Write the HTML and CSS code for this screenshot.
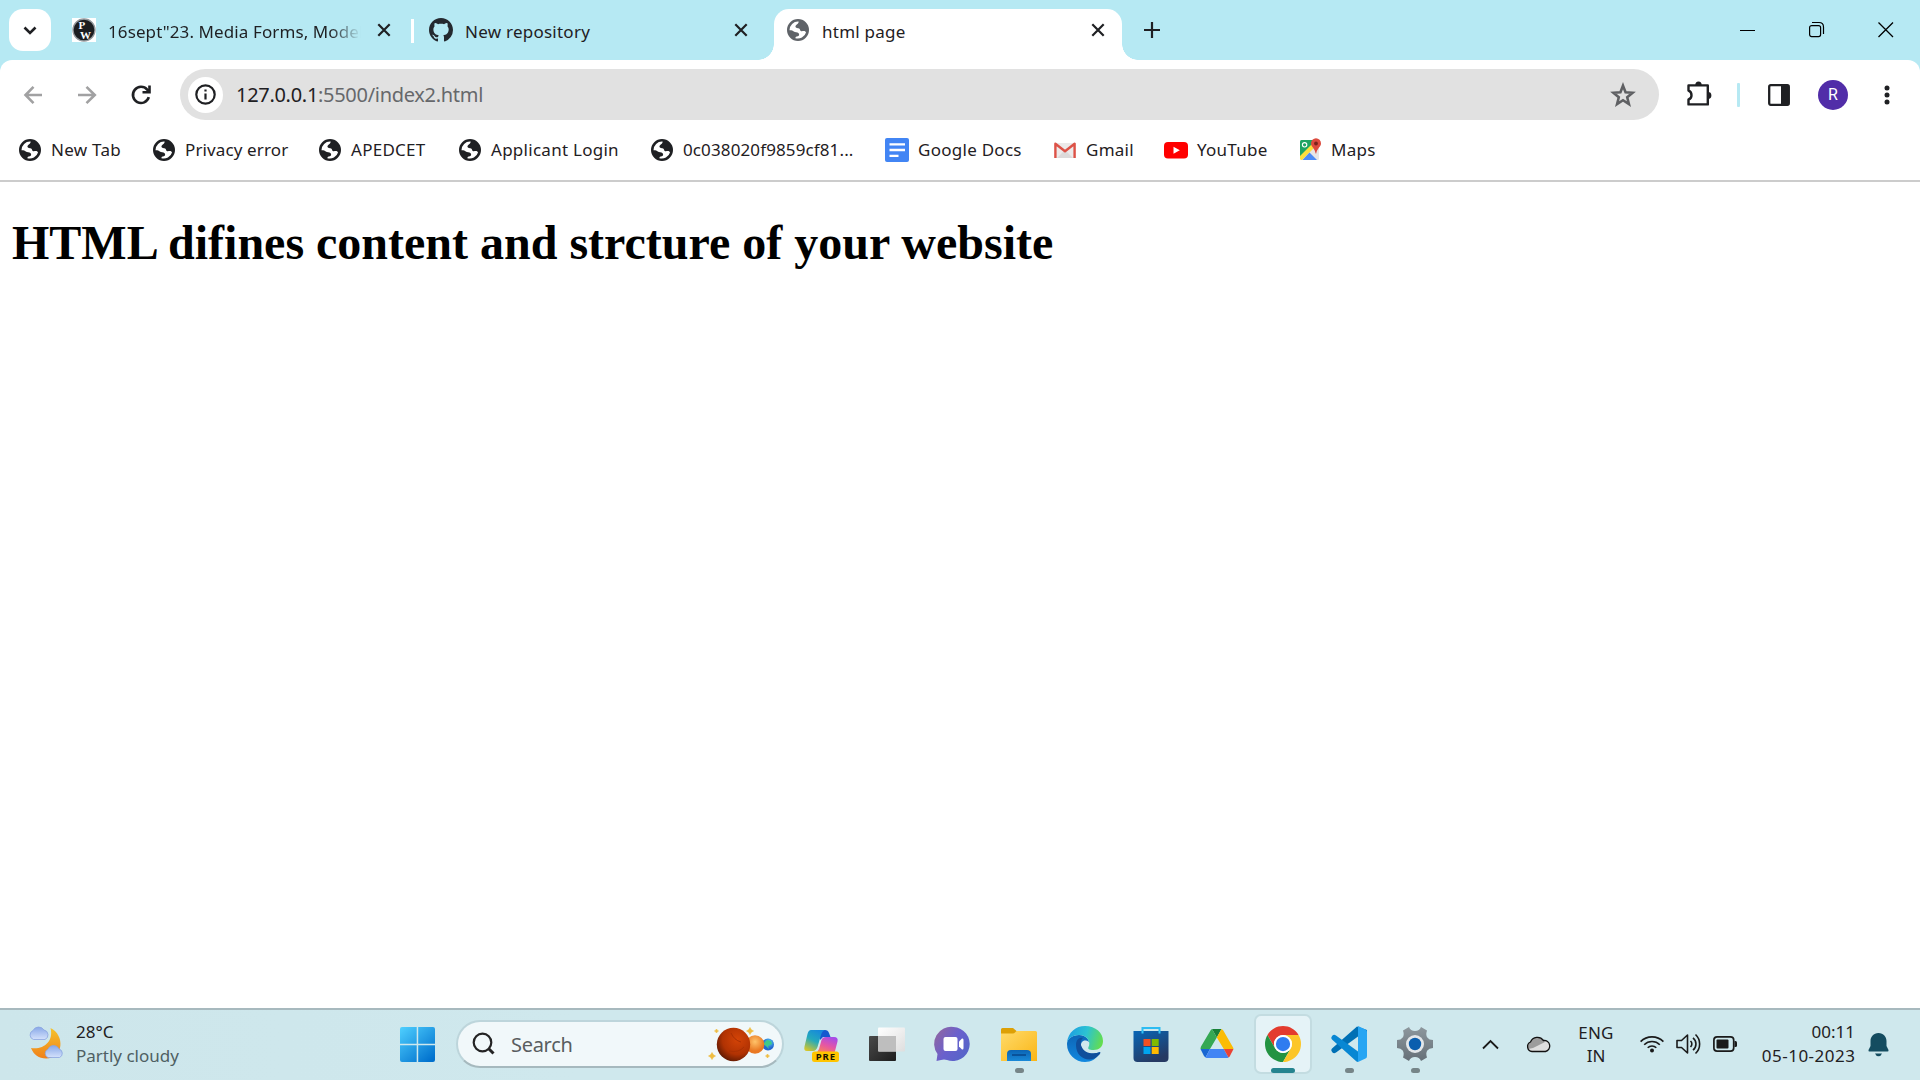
FILE: index.html
```html
<!DOCTYPE html>
<html lang="en">
<head>
<meta charset="utf-8">
<title>html page</title>
<link rel="stylesheet" href="styles.css">
</head>
<body>
<svg class="defs" aria-hidden="true">
  <symbol id="globe" viewBox="0 0 22 22">
    <path d="M11 0a11 11 0 1 0 0 22a11 11 0 0 0 0-22zM11.6 2.6C11.9 4.6 10 5.3 8.8 6.4C8 7.3 8.6 8.6 9.8 8.9C11.8 9.1 13 9.6 13.2 11.2C13.5 12.5 15.4 12.2 16.5 12C17.8 11.8 18.8 12.6 19 13.4A8.6 8.6 0 0 1 8.4 19.2C8.2 18 9.4 17.6 10.8 17.3C12.4 16.9 12.4 15.2 11.6 14.2C10.4 13 8 13.6 6.8 12.6C5.8 11.4 4 11.2 2.5 11.3A8.5 8.5 0 0 1 11.6 2.6z" fill="currentColor" fill-rule="evenodd"/>
  </symbol>
  <symbol id="cross" viewBox="0 0 14 14">
    <path d="M1.3 1.3L12.7 12.7M12.7 1.3L1.3 12.7" fill="none" stroke="currentColor" stroke-width="2.2"/>
  </symbol>
</svg>

<header class="tabstrip">
  <button class="tab-search"><svg width="14" height="9" viewBox="0 0 14 9"><path d="M1.5 1.5L7 7L12.5 1.5" fill="none" stroke="#1f2023" stroke-width="2.6"/></svg></button>
  <div class="tab tab-first">
    <svg class="favicon" viewBox="0 0 24 24"><rect width="24" height="24" fill="#fff"/><circle cx="12" cy="12" r="11" fill="#1b1d20" stroke="#92989c" stroke-width="1.3"/><g fill="#fff" font-family="Liberation Serif, serif" font-weight="700"><text x="6.5" y="10.5" font-size="11">P</text><text x="8" y="20.5" font-size="11">W</text></g></svg>
    <span class="tab-title faded">16sept"23. Media Forms, Models</span>
    <svg class="tab-close"><use href="#cross"/></svg>
  </div>
  <div class="tab-divider"></div>
  <div class="tab tab-second">
    <svg class="favicon" viewBox="0 0 16 16"><path fill="#24292f" d="M8 0C3.58 0 0 3.58 0 8c0 3.54 2.29 6.53 5.47 7.59.4.07.55-.17.55-.38 0-.19-.01-.82-.01-1.49-2.01.37-2.53-.49-2.69-.94-.09-.23-.48-.94-.82-1.13-.28-.15-.68-.52-.01-.53.63-.01 1.08.58 1.23.82.72 1.21 1.87.87 2.33.66.07-.52.28-.87.51-1.07-1.78-.2-3.64-.89-3.64-3.95 0-.87.31-1.59.82-2.15-.08-.2-.36-1.02.08-2.12 0 0 .67-.21 2.2.82.64-.18 1.32-.27 2-.27s1.36.09 2 .27c1.53-1.04 2.2-.82 2.2-.82.44 1.1.16 1.92.08 2.12.51.56.82 1.27.82 2.15 0 3.07-1.87 3.75-3.65 3.95.29.25.54.73.54 1.48 0 1.07-.01 1.93-.01 2.2 0 .21.15.46.55.38A8.01 8.01 0 0 0 16 8c0-4.42-3.58-8-8-8z"/></svg>
    <span class="tab-title">New repository</span>
    <svg class="tab-close"><use href="#cross"/></svg>
  </div>
  <div class="tab tab-active">
    <svg class="favicon-globe"><use href="#globe"/></svg>
    <span class="tab-title">html page</span>
    <svg class="tab-close"><use href="#cross"/></svg>
  </div>
  <svg class="new-tab" viewBox="0 0 16 16"><path d="M8 0V16M0 8H16" stroke="#1f2023" stroke-width="2.2"/></svg>
  <div class="window-controls">
    <svg width="16" height="16"><path d="M0 8.5H15" stroke="#000"/></svg>
    <svg width="16" height="16"><path d="M3 .5H10Q14.5 .5 14.5 5V12" fill="none" stroke="#000" stroke-width="1.2"/><rect x=".6" y="3.6" width="11" height="11" rx="2" fill="none" stroke="#000" stroke-width="1.2"/></svg>
    <svg width="16" height="16"><path d="M.5 .5L15 15M15 .5L.5 15" stroke="#000" stroke-width="1.3"/></svg>
  </div>
</header>

<div class="chrome-panel">
  <nav class="toolbar">
    <svg class="nav-icon dim" viewBox="0 0 20 20"><path d="M18 10H2.500M9.500 1.8L1.500 10L9.500 18.2" /></svg>
    <svg class="nav-icon dim" viewBox="0 0 20 20"><path d="M1 10H17M9.5 1.8L17.8 10L9.5 18.2"/></svg>
    <svg class="nav-icon reload" viewBox="0 0 20 20"><path d="M17.8 12.2A8.1 8.1 0 1 1 16.2 4.6L18 6.6M18.5 .6V7.2H11.5"/></svg>
    <div class="omnibox">
      <span class="site-info"><svg width="21" height="21" viewBox="0 0 21 21"><circle cx="10.5" cy="10.5" r="9.2" fill="none" stroke="#1f2023" stroke-width="2.2"/><path d="M10.5 9.5V15.5M10.5 5.4V7.6" stroke="#1f2023" stroke-width="2.2"/></svg></span>
      <span class="url">127.0.0.1<span class="url-path">:5500/index2.html</span></span>
      <svg class="star" viewBox="0 0 24 24"><path d="M12 4L14.2 9.700L20.200 10.100L15.600 13.900L17.100 19.800L12 16.500L6.900 19.800L8.400 13.900L3.800 10.100L9.800 9.700Z" fill="none" stroke="#5f6063" stroke-width="2.2"/></svg>
    </div>
    <svg class="puzzle" viewBox="0 0 26 26"><path d="M2.500 3.400H21.800V22.400H2.500V17.500C6.500 16.500 6.500 10 2.500 8.600Z" fill="none" stroke="#1f2023" stroke-width="2.400" stroke-linejoin="round"/><path d="M9.300 3.200A3.200 3.600 0 0 1 15.700 3.200ZM22 10A3.400 3.400 0 0 1 22 16.800Z" fill="#1f2023"/></svg>
    <div class="toolbar-divider"></div>
    <svg class="side-panel" viewBox="0 0 22 22"><rect x="1.2" y="1.2" width="19.6" height="19.6" rx="1.5" fill="none" stroke="#1f2023" stroke-width="2.3"/><path d="M13 1H21V21H13Z" fill="#1f2023"/></svg>
    <div class="avatar">R</div>
    <svg class="menu-dots" viewBox="0 0 6 20"><g fill="#1f2023"><circle cx="3" cy="3" r="2.5"/><circle cx="3" cy="10" r="2.5"/><circle cx="3" cy="17" r="2.5"/></g></svg>
  </nav>
  <nav class="bookmarks">
    <a><svg class="mark-globe"><use href="#globe"/></svg><span>New Tab</span></a>
    <a><svg class="mark-globe"><use href="#globe"/></svg><span class="tight">Privacy error</span></a>
    <a><svg class="mark-globe"><use href="#globe"/></svg><span>APEDCET</span></a>
    <a><svg class="mark-globe"><use href="#globe"/></svg><span>Applicant Login</span></a>
    <a><svg class="mark-globe"><use href="#globe"/></svg><span class="tight">0c038020f9859cf81...</span></a>
    <a><svg class="mark-icon" viewBox="0 0 24 24"><rect width="24" height="24" rx="2" fill="#4285f4"/><path d="M4.500 6.300H20M4.500 12H20M4.500 17.900H13.500" stroke="#fff" stroke-width="2.300"/></svg><span>Google Docs</span></a>
    <a><svg class="mark-icon" viewBox="0 0 24 24"><path d="M3 5H21V20H3Z" fill="#eceaea"/><path d="M4 20L11 13H13L20 20Z" fill="#dcdada"/><path d="M2.4 20V5.8L12 13.2L21.6 5.8V20" fill="none" stroke="#dd5247" stroke-width="2.4" stroke-linejoin="round"/></svg><span>Gmail</span></a>
    <a><svg class="mark-icon" viewBox="0 0 24 24"><rect y="4" width="24" height="16.5" rx="4" fill="#f00"/><path d="M9.5 8.7L15.8 12.2L9.5 15.7Z" fill="#fff"/></svg><span>YouTube</span></a>
    <a><svg class="mark-icon" viewBox="0 0 24 24"><rect x="1" y="2" width="19" height="20" rx="1.5" fill="#e6e6e6"/><path d="M2.5 2H15V9L2 21Q1 21 1 20V3.5Q1 2 2.5 2Z" fill="#1fa463"/><path d="M1 18L13 6L16 9L3 22H2L1 21Z" fill="#fddf3d"/><path d="M3.5 22L10.5 14.5L18 22Z" fill="#4c8bf5"/><circle cx="5.6" cy="6.8" r="2.2" fill="none" stroke="#fff" stroke-width="1.1"/><path d="M17 0.3A5 5 0 0 1 22 5.4C22 9 18 10 17.2 15.5H16.6C16 10 12 9 12 5.4A5 5 0 0 1 17 .3Z" fill="#dc4b3e"/><circle cx="17" cy="5.5" r="1.9" fill="#7b231c"/></svg><span class="maps-label">Maps</span></a>
  </nav>
</div>

<main class="page"><h1>HTML difines content and strcture of your website</h1></main>

<footer class="taskbar">
  <div class="weather">
    <svg width="38" height="36" viewBox="0 0 38 36">
      <defs><linearGradient id="moon" x2="0" y2="1"><stop stop-color="#f5c32c"/><stop offset="1" stop-color="#f0801a"/></linearGradient><linearGradient id="cloud" x2="0" y2="1"><stop stop-color="#88a8e8"/><stop offset="1" stop-color="#d4e1fb"/></linearGradient></defs>
      <path d="M22.5 3C37 10 36 33 18 33.5C11 33.5 5.500 29.500 3 23C15 25 26 17 22.500 3Z" fill="url(#moon)"/>
      <path d="M5.500 14.500A4.800 4.800 0 0 1 5 5.500A6.300 6.300 0 0 1 16 5A5 5 0 0 1 17 14.500Z" fill="url(#cloud)" stroke="#8aa4df" stroke-width=".8"/>
      <path d="M20 32.500A4.500 4.500 0 0 1 20 24.200A6 6 0 0 1 31 24A4.500 4.500 0 0 1 31.500 32.500Z" fill="url(#cloud)" stroke="#8aa4df" stroke-width=".8"/>
    </svg>
    <div class="weather-text"><span class="temp">28°C</span><span class="sky">Partly cloudy</span></div>
  </div>
  <svg class="start" viewBox="0 0 35 35"><defs><linearGradient id="win" gradientUnits="userSpaceOnUse" x2="30" y2="35"><stop stop-color="#4fd0ff"/><stop offset="1" stop-color="#0070cd"/></linearGradient></defs><path d="M2 0H16.700V16.700H0V2Q0 0 2 0ZM18.200 0H33Q35 0 35 2V16.700H18.200ZM0 18.200H16.700V35H2Q0 35 0 33ZM18.200 18.200H35V33Q35 35 33 35H18.200Z" fill="url(#win)"/></svg>
  <div class="search">
    <svg width="24" height="24" viewBox="0 0 24 24"><circle cx="10.500" cy="10.500" r="8.800" fill="none" stroke="#242424" stroke-width="2.200"/><path d="M16.500 16.500L21.500 21.500" stroke="#242424" stroke-width="3"/></svg>
    <span class="search-label">Search</span>
    <svg class="planets" width="68" height="36" viewBox="0 0 68 36">
      <defs><radialGradient id="mars" cx=".62" cy=".35" r=".75"><stop stop-color="#d44407"/><stop offset=".6" stop-color="#b03203"/><stop offset="1" stop-color="#4e1503"/></radialGradient><radialGradient id="venus" cx=".5" cy=".35"><stop stop-color="#ffc36a"/><stop offset="1" stop-color="#e97822"/></radialGradient><radialGradient id="earth" cx=".6" cy=".3"><stop stop-color="#55d0ef"/><stop offset="1" stop-color="#2367cf"/></radialGradient></defs>
      <circle cx="61" cy="18.500" r="6" fill="url(#earth)"/><path d="M60 14L64 15L65 18L61 20L62 23L59 20L56 18Z" fill="#3fc98a"/>
      <circle cx="48" cy="18.500" r="9.300" fill="url(#venus)"/><circle cx="26.500" cy="18.500" r="16.700" fill="url(#mars)"/><path d="M24 7Q27 14 34 16M22 25Q32 27 37 21" fill="none" stroke="#a93003" stroke-width="1"/>
      <path d="M43 1.500L44.300 3.700L46.500 5L44.300 6.300L43 8.500L41.700 6.300L39.500 5L41.700 3.700ZM5 26.500L6.400 28.800L8.500 30L6.400 31.300L5 33.500L3.600 31.300L1.500 30L3.600 28.800ZM9.500 3L10.300 4.200L11.500 5L10.300 5.800L9.500 7L8.700 5.800L7.500 5L8.700 4.200ZM60.500 28L61.300 29.200L62.500 30L61.300 30.800L60.500 32L59.700 30.800L58.500 30L59.700 29.200Z" fill="#efbd43" stroke="#efbd43" stroke-width=".6"/>
    </svg>
  </div>
  <div class="apps">
    <div class="app">
      <svg viewBox="0 0 36 36"><defs><linearGradient id="copA" x1=".7" x2=".2" y2="1"><stop stop-color="#1688dc"/><stop offset=".5" stop-color="#25aabb"/><stop offset="1" stop-color="#d5c629"/></linearGradient><linearGradient id="copB" x1=".7" x2=".2" y2="1"><stop stop-color="#a64ce8"/><stop offset=".5" stop-color="#e556a4"/><stop offset="1" stop-color="#fb8851"/></linearGradient></defs>
        <path d="M17 4H22Q25 4 26 7L27.500 11H20L17 14Z" fill="#1559cf"/><path d="M8 4H22Q19 5 18 9L14.500 21Q13 25 10 25H4Q.500 25 1.500 20.500L4.500 8Q5.500 4 8 4Z" fill="url(#copA)"/><path d="M23 11H31Q35.500 11 34.500 15.500L31.500 27H12Q15 26 16 23L18.500 14Q19.500 11 23 11Z" fill="url(#copB)"/><rect x="9" y="25.500" width="27" height="10.500" rx="2.500" fill="#ffc400"/><text x="12.800" y="34" font-family="Noto Sans, sans-serif" font-weight="700" font-size="9.500" letter-spacing=".9" fill="#1a1500">PRE</text></svg>
    </div>
    <div class="app">
      <svg viewBox="0 0 36 36"><defs><linearGradient id="tvA" x2="1" y2="1"><stop stop-color="#4a4a4a"/><stop offset="1" stop-color="#1d1d1d"/></linearGradient><linearGradient id="tvB" x2="1" y2="1"><stop stop-color="#fff"/><stop offset="1" stop-color="#dedede"/></linearGradient></defs><rect y="10" width="27" height="25" rx="1" fill="url(#tvA)"/><rect x="9" y="1.500" width="27" height="24" rx="1" fill="url(#tvB)"/><path d="M9 10H27V25.500H10Q9 25.500 9 24.500Z" fill="#bebebe"/></svg>
    </div>
    <div class="app">
      <svg viewBox="0 0 36 36"><defs><linearGradient id="chat" x1=".1" y1=".2" x2=".9" y2=".7"><stop stop-color="#8a65a8"/><stop offset=".5" stop-color="#6a60cd"/><stop offset="1" stop-color="#5864c9"/></linearGradient></defs><path d="M18.500 1A17 17 0 1 1 12 34Q9 33 6 34L1.500 35L2.500 28A17 17 0 0 1 18.500 1Z" fill="url(#chat)"/><rect x="8.500" y="11" width="14" height="14" rx="2" fill="#fff"/><path d="M24 15.500L27 12.500Q28.500 12 28.500 14V22Q28.500 24 27 23.500L24 20.500Z" fill="#fff"/></svg>
    </div>
    <div class="app">
      <svg viewBox="0 0 36 36"><defs><linearGradient id="fold" x2="1" y2="1"><stop stop-color="#ffdb6b"/><stop offset="1" stop-color="#fab515"/></linearGradient><linearGradient id="foldB" x2="0" y2="1"><stop stop-color="#0b64b4"/><stop offset="1" stop-color="#1989d8"/></linearGradient></defs><path d="M0 3.500Q0 2 1.500 2H12L15.500 5H18V14H0Z" fill="#dda006"/><path d="M0 7.500H12Q13 7.500 14.500 6L15.500 5H34.500Q36 5 36 6.500V35H0Z" fill="url(#fold)"/><path d="M6 35V28Q6 24 10 24H26Q30 24 30 28V35Z" fill="url(#foldB)"/><path d="M11 29H25" stroke="#08498e" stroke-width="1.600"/></svg>
      <i class="dot"></i>
    </div>
    <div class="app">
      <svg viewBox="0 0 36 36"><defs><linearGradient id="edgeA" x1="0" y1=".4" x2="1" y2=".6"><stop stop-color="#1b9de2"/><stop offset=".5" stop-color="#2cc3d2"/><stop offset="1" stop-color="#65de4b"/></linearGradient><linearGradient id="edgeB" x2="0" y2="1"><stop stop-color="#0d66b7"/><stop offset="1" stop-color="#1288df"/></linearGradient></defs>
        <path d="M0 18C0 13 5 9 12 9C19 9 22 14 22 16C17 12.500 13.500 16 14 20C15 27 24 30 33 26C30 33 24 36 18 36A18 18 0 0 1 0 18Z" fill="url(#edgeB)"/><path d="M9 19C9 14 12 11 16 12C13.500 14 13.500 18 14.500 20.500C17 27 26 29 33 26C34 26.500 33 28 32 29C24 38 9 33 9 19Z" fill="#104f9c"/><path d="M0 17C1 6 9 0 18 0C29 0 36 7 36 15C36 21 32 24 26.500 24C22 24 20.500 23 21.500 21C24 17 21 9 12 9C5 9 1 13 0 17Z" fill="url(#edgeA)"/></svg>
    </div>
    <div class="app">
      <svg viewBox="0 0 36 36"><defs><linearGradient id="store" x2=".5" y2="1"><stop stop-color="#0866b6"/><stop offset="1" stop-color="#263a63"/></linearGradient></defs><path d="M9.500 8V2H26.500V8" fill="none" stroke="#2dbcf2" stroke-width="2"/><path d="M.500 5H35.500V32Q35.500 36 31.500 36H4.500Q.500 36 .500 32Z" fill="url(#store)"/><path d="M9.500 5V7.500M26.500 5V7.500" stroke="#35c3f5" stroke-width="2"/><path d="M10.500 13H17.500V20H10.500Z" fill="#f25022"/><path d="M18.700 13H25.700V20H18.700Z" fill="#7fba00"/><path d="M10.500 21H17.500V28H10.500Z" fill="#00a4ef"/><path d="M18.700 21H25.700V28H18.700Z" fill="#ffb900"/></svg>
    </div>
    <div class="app">
      <svg viewBox="0 0 36 36"><path d="M13 3H22.500L17.800 11.500Z" fill="#188038"/><path d="M13 3Q12 3.500 11.500 4.500L2 20.500Q1.500 21.700 1.500 23H11L17.800 11.500Z" fill="#34a853"/><path d="M22.500 3Q23.700 3.500 24.300 4.500L33.500 20.500Q34.500 21.700 34.500 23H24.800L17.800 11.500Z" fill="#fbbc04"/><path d="M1.500 23H11L6.500 31.500L5 30Z" fill="#1967d2"/><path d="M11 23H24.800L29.500 31.500Q28.500 32 27.500 32H8.500Q7.500 32 6.500 31.500Z" fill="#4285f4"/><path d="M24.800 23H34.500L30.700 30.500L29.500 31.500Z" fill="#ea4335"/></svg>
    </div>
    <div class="app current">
      <svg viewBox="0 0 48 48"><path d="M24 12H44.780A24 24 0 0 0 3.220 12L13.610 30A12 12 0 0 1 24 12Z" fill="#e33b2e"/><path d="M34.390 30L24 48A24 24 0 0 1 3.220 12L13.610 30A12 12 0 0 0 34.390 30Z" fill="#229342"/><path d="M24 48A24 24 0 0 0 44.780 12H24A12 12 0 0 1 34.390 30Z" fill="#fcc629"/><circle cx="24" cy="24" r="12" fill="#fff"/><circle cx="24" cy="24" r="9.500" fill="#2f7cf0"/></svg>
      <i class="dot"></i>
    </div>
    <div class="app">
      <svg viewBox="0 0 36 36"><path d="M26 .500L36 4V10L27 10.500L5 26.500Q3 28 1.500 26.500L.800 25.500Q-.500 24 1 22.500Z" fill="#0070b5"/><path d="M1.500 9.500Q3 8 5 9.500L27 25.500V36L25.500 35.500L1 13.500Q-.500 12 .800 10.500Z" fill="#0887d3"/><path d="M27 0L34.500 3.500Q36 4 36 6V30Q36 32 34.500 32.500L27 36Z" fill="#27a5f3"/></svg>
      <i class="dot"></i>
    </div>
    <div class="app">
      <svg viewBox="0 0 36 36"><defs><linearGradient id="gear" x2="0" y2="1"><stop stop-color="#8d979d"/><stop offset="1" stop-color="#667078"/></linearGradient></defs><path d="M12 1Q13.500 5 18 5Q22.500 5 24 1L30 4.500Q28.500 9 30.300 11.500Q32 14 36 14V22Q32 22 30.300 24.500Q28.500 27 30 31.500L24 35Q22.500 31 18 31Q13.500 31 12 35L6 31.500Q7.500 27 5.700 24.500Q4 22 0 22V14Q4 14 5.700 11.500Q7.500 9 6 4.500Z" fill="url(#gear)"/><circle cx="18" cy="18" r="9" fill="#e3e7ea"/><circle cx="18" cy="18" r="6.200" fill="#0a5eae"/></svg>
      <i class="dot"></i>
    </div>
  </div>
  <div class="tray">
    <svg class="chevron" width="17" height="11" viewBox="0 0 17 11"><path d="M1 9.500L8.500 2L16 9.500" fill="none" stroke="#1a1a1a" stroke-width="1.800"/></svg>
    <svg class="onedrive" width="25" height="18" viewBox="0 0 25 18"><path d="M6 16.500A5 5 0 0 1 4.500 7A7.500 7.500 0 0 1 17.500 5.500A5.600 5.600 0 0 1 19.500 16.500Z" fill="#dedede"/><path d="M4.500 7A7.500 7.500 0 0 1 17.500 5.500L20 6.500L7 13L2 14Q-.500 10 4.500 7Z" fill="#9c9c9c"/><path d="M6 16.500A5 5 0 0 1 4.500 7A7.500 7.500 0 0 1 17.500 5.500A5.600 5.600 0 0 1 19.500 16.500Z" fill="none" stroke="#111" stroke-width="1.300"/></svg>
    <div class="lang"><span class="lang-code">ENG</span><span>IN</span></div>
    <div class="status">
      <svg width="24" height="18" viewBox="0 0 24 18"><g fill="none" stroke="#1a1a1a" stroke-width="1.600"><path d="M.600 6.600A16 16 0 0 1 23.400 6.600M4.200 9.800A11 11 0 0 1 19.800 9.800M7.700 12.800A6 6 0 0 1 16.300 12.800"/></g><circle cx="12" cy="15.600" r="2" fill="#1a1a1a"/></svg>
      <svg width="25" height="22" viewBox="0 0 25 22"><g fill="none" stroke="#1a1a1a" stroke-width="1.600" stroke-linejoin="round"><path d="M1 7.500H5.500L11.500 2V20L5.500 14.500H1Z"/><path d="M14.500 8A4 4 0 0 1 14.500 14M17 4.800A8 8 0 0 1 17 17.200M19.500 1.500A13 13 0 0 1 19.500 20.500"/></g></svg>
      <svg width="25" height="16" viewBox="0 0 25 16"><rect x=".900" y=".900" width="19.800" height="14.200" rx="3.200" fill="none" stroke="#1a1a1a" stroke-width="1.700"/><rect x="3.500" y="3.500" width="12" height="9" rx="1" fill="#1a1a1a"/><path d="M21.500 5H22.500Q24 5 24 6.500V9.500Q24 11 22.500 11H21.500Z" fill="#1a1a1a"/></svg>
    </div>
    <div class="clock"><span>00:11</span><span class="date">05-10-2023</span></div>
    <svg class="bell" width="21" height="24" viewBox="0 0 21 24"><path d="M10.500 0C5.500 0 2.500 4 2.500 8V13L.500 17Q.200 18.500 1.500 18.500H19.500Q20.800 18.500 20.500 17L18.500 13V8C18.500 4 15.500 0 10.500 0ZM7 20.500H14Q13 23.200 10.500 23.200Q8 23.200 7 20.500Z" fill="#144c60"/></svg>
  </div>
</footer>
</body>
</html>
```

FILE: styles.css
```css
* { box-sizing: border-box; }

body {
  margin: 0;
  width: 1920px;
  height: 1080px;
  overflow: hidden;
  display: flex;
  flex-direction: column;
  background: #fff;
  color: #1f2023;
  font-family: "Noto Sans", "Open Sans", sans-serif;
  font-size: 17px;
}

.defs { display: none; }
svg { display: block; flex: none; overflow: visible; }
span { white-space: nowrap; }

/* Tab strip */
.tabstrip {
  display: flex;
  align-items: flex-start;
  height: 60px;
  padding: 9px 26px 0 9px;
  background: #b6e9f3;
}
.tab-search {
  display: flex;
  align-items: center;
  justify-content: center;
  width: 42px;
  height: 42px;
  padding: 0;
  border: 0;
  border-radius: 14px;
  background: #fff;
}
.tab { display: flex; align-items: center; height: 42px; }
.tab-first { width: 360px; padding-left: 21px; }
.tab-second { width: 361px; padding-left: 16px; }
.tab-active {
  position: relative;
  width: 348px;
  height: 51px;
  padding: 0 0 9px 13px;
  border-radius: 15px 15px 0 0;
  background: #fff;
}
.tab-active::before,
.tab-active::after {
  content: "";
  position: absolute;
  bottom: 0;
  width: 16px;
  height: 16px;
}
.tab-active::before { left: -16px; background: radial-gradient(circle at 0 0, transparent 15.500px, #fff 16px); }
.tab-active::after { right: -16px; background: radial-gradient(circle at 100% 0, transparent 15.500px, #fff 16px); }
.favicon { width: 24px; height: 24px; }
.favicon-globe { width: 22px; height: 22px; color: #5f6368; margin-right: 1px; }
.tab-title { flex: 1; margin-left: 12px; line-height: 24px; padding-top: 3px; overflow: hidden; letter-spacing: 0.250px; }
.faded {
  flex: none;
  width: 253px;
  letter-spacing: 0.100px;
  -webkit-mask-image: linear-gradient(90deg, #000 222px, transparent 253px);
  mask-image: linear-gradient(90deg, #000 222px, transparent 253px);
}
.tab-close { width: 14px; height: 14px; }
.tab-first .tab-close { margin-left: 16px; }
.tab-second .tab-close { margin-right: 26px; }
.tab-active .tab-close { margin-right: 17px; }
.tab-divider { width: 3px; height: 24px; margin: 10px -1px 0 0; background: #fff; }
.new-tab { width: 16px; height: 16px; margin: 13px 0 0 22px; }
.window-controls { display: flex; gap: 53px; margin: 13px 0 0 auto; }

/* Toolbar */
.chrome-panel {
  height: 122px;
  background: linear-gradient(#b6e9f3 20px, #fff 20px);
}
.toolbar {
  display: flex;
  align-items: center;
  height: 69px;
  padding-left: 24px;
  background: #fff;
  border-radius: 12px 12px 0 0;
}
.nav-icon { width: 20px; height: 20px; margin-right: 33px; fill: none; stroke: #1f2023; stroke-width: 2.600px; }
.nav-icon.dim { stroke: #a1a1a2; }
.nav-icon.reload { margin: 0 29px 0 1px; }
.omnibox {
  display: flex;
  align-items: center;
  width: 1479px;
  height: 51px;
  padding-left: 8px;
  border-radius: 26px;
  background: #e1e1e1;
}
.site-info {
  display: flex;
  align-items: center;
  justify-content: center;
  width: 35px;
  height: 36px;
  border-radius: 50%;
  background: #fff;
}
.url { margin-left: 13px; font-size: 20px; letter-spacing: -0.300px; }
.url-path { color: #66686b; }
.star { width: 28px; height: 28px; margin: 0 22px 0 auto; }
.puzzle { width: 26px; height: 26px; margin-left: 27px; }
.toolbar-divider { width: 3px; height: 24px; margin-left: 25px; border-radius: 1px; background: #b6e9f3; }
.side-panel { width: 22px; height: 22px; margin-left: 28px; }
.avatar {
  width: 30px;
  height: 30px;
  margin-left: 28px;
  border-radius: 50%;
  background: #512da8;
  color: #fff;
  font: 16px/30px Roboto, sans-serif;
  text-align: center;
}
.menu-dots { width: 6px; height: 20px; margin-left: 36px; }

/* Bookmarks */
.bookmarks {
  display: grid;
  grid-template-columns: 134px 166px 140px 192px 234px 168px 111px 135px 120px;
  height: 53px;
  padding-left: 19px;
  background: #fff;
  border-bottom: 2px solid #ccc;
}
.bookmarks a { display: flex; height: 42px; align-items: center; }
.bookmarks span { line-height: 24px; letter-spacing: 0.270px; }
.bookmarks .tight { letter-spacing: 0.120px; }
.bookmarks .maps-label { margin-left: -1px; }
.mark-globe { width: 22px; height: 22px; margin-right: 10px; }
.mark-icon { width: 24px; height: 24px; margin-right: 9px; }

/* Page */
.page { height: 826px; padding: 32px 12px 0; }
.page h1 {
  margin: 0;
  color: #000;
  font: 700 48px/58px "Liberation Serif", serif;
  white-space: nowrap;
}

/* Taskbar */
.taskbar {
  display: flex;
  align-items: center;
  height: 72px;
  padding-bottom: 2px;
  border-top: 2px solid #a7b9be;
  background: linear-gradient(90deg, #cde6eb, #cfe8ed 30%, #cfe8ed);
}
.weather { display: flex; align-items: flex-end; width: 400px; padding-left: 28px; }
.weather-text { display: flex; flex-direction: column; margin-left: 10px; line-height: 24px; }
.weather svg { margin-bottom: 7px; }
.sky { color: #4f5f63; }
.start { width: 35px; height: 35px; }
.search {
  display: flex;
  align-items: center;
  width: 328px;
  height: 48px;
  margin-left: 21px;
  padding-left: 14px;
  border: 2px solid #bdd5db;
  border-bottom-color: #a6b9be;
  border-radius: 24px;
  background: #f1f8fa;
}
.search-label { margin-left: 15px; font-size: 20px; letter-spacing: -0.300px; color: #595d5f; }
.planets { margin: 0 7px 0 auto; }
.apps { display: flex; margin-left: 4px; }
.app {
  position: relative;
  display: flex;
  align-items: center;
  justify-content: center;
  width: 66px;
  height: 68px;
}
.app svg { width: 36px; height: 36px; }
.app.current { width: 58px; height: 60px; margin: 4px; border: 2px solid #c3dce1; border-radius: 7px; background: #e5f3f7; }
.dot {
  position: absolute;
  left: 50%;
  bottom: 5px;
  width: 9px;
  height: 5px;
  margin-left: -4px;
  border-radius: 3px;
  background: #768588;
}
.current .dot { bottom: -1px; width: 24px; margin-left: -12px; background: #25848f; }
.tray { display: flex; align-items: center; margin-left: 34px; line-height: 24px; }
.onedrive { margin-left: 27px; }
.lang { display: flex; flex-direction: column; width: 60px; margin-left: 15px; align-items: center; }
.lang-code { padding-top: 1px; margin-bottom: -1px; letter-spacing: 0.200px; }
.status { display: flex; align-items: center; gap: 12px; margin-left: 14px; padding-bottom: 1px; }
.clock { display: flex; flex-direction: column; width: 117px; align-items: flex-end; }
.date { letter-spacing: 0.500px; margin-right: -0.500px; }
.bell { margin: 1px 0 0 13px; }
```
